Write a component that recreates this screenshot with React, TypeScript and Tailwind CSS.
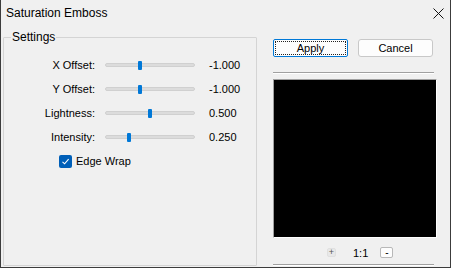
import React from "react";

const rows = [
  { label: "X Offset:", pos: 140, value: "-1.000" },
  { label: "Y Offset:", pos: 140, value: "-1.000" },
  { label: "Lightness:", pos: 150, value: "0.500" },
  { label: "Intensity:", pos: 129, value: "0.250" },
];

function Slider({ pos }: { pos: number }) {
  // track spans x 105..195
  const left = pos - 105 - 2;
  return (
    <div className="relative w-[90px] h-[24px] flex items-center">
      <div className="w-full h-[4px] bg-[#dcdcdc] border border-[#d0d0d0] rounded-[2px]" />
      <div
        className="absolute top-[8px] w-[4px] h-[9px] bg-[#0078d7] rounded-[1px]"
        style={{ left }}
      />
    </div>
  );
}

export default function App() {
  return (
    <div
      className="w-[451px] h-[268px] bg-[#f0f0f0] border-l border-r border-b border-[#3c3c3c] flex flex-col text-black overflow-hidden"
      style={{ fontFamily: '"Liberation Sans", Arial, sans-serif' }}
    >
      {/* title bar */}
      <div className="h-[29px] flex items-start">
        <div className="pl-[5px] pt-[5px] text-[12px] leading-[16px] flex-1">Saturation Emboss</div>
        <svg className="mt-[8px] mr-[6px]" width="11" height="11" viewBox="0 0 11 11">
          <path d="M0.5 0.5 L10.5 10.5 M10.5 0.5 L0.5 10.5" stroke="#111" strokeWidth="1" fill="none" />
        </svg>
      </div>

      <div className="flex flex-1">
        {/* settings group */}
        <fieldset className="ml-[2px] w-[254px] h-[237px] border border-[#d4d4d4] rounded-[1px] text-[11px]">
          <legend className="ml-[7px] px-[1px] text-[12px] leading-[16px]">Settings</legend>
          <div className="mt-[8px] flex flex-col">
            {rows.map((r) => (
              <div key={r.label} className="h-[24px] flex items-center">
                <div className="w-[91px] text-right leading-[14px]">{r.label}</div>
                <div className="ml-[10px]">
                  <Slider pos={r.pos} />
                </div>
                <div className="ml-[14px] leading-[14px]">{r.value}</div>
              </div>
            ))}
            <div className="mt-[4px] h-[16px] flex items-center pl-[55px]">
              <div className="w-[13px] h-[13px] rounded-[2px] bg-[#005fb8] flex items-center justify-center">
                <svg width="9" height="9" viewBox="0 0 9 9">
                  <path d="M1.5 4.8 L3.6 6.8 L7.6 2.2" stroke="#fff" strokeWidth="1.1" fill="none" />
                </svg>
              </div>
              <span className="ml-[4px] leading-[14px]">Edge Wrap</span>
            </div>
          </div>
        </fieldset>

        {/* right column */}
        <div className="ml-[16px] w-[164px] flex flex-col text-[11px]">
          <div className="mt-[10px] flex gap-[10px]">
            <div className="w-[75px] h-[18px] border border-[#0078d7] rounded-[2px] bg-[#fdfdfd] p-[1px]">
              <div className="w-full h-full border border-dotted border-[#222] flex items-center justify-center leading-[12px]">
                Apply
              </div>
            </div>
            <div className="w-[75px] h-[18px] border border-[#c8c8c8] rounded-[3px] bg-[#fdfdfd] flex items-center justify-center leading-[12px]">
              Cancel
            </div>
          </div>
          <div className="mt-[15px] w-[161px] h-[2px] border-t border-[#a0a0a0] border-b border-b-white" />
          <div className="mt-[5px] w-[164px] h-[159px] border-t border-l border-[#a0a0a0] border-b border-r border-b-white border-r-white bg-black" />
          <div className="mt-[9px] h-[11px] flex items-center">
            <div className="ml-[54px] w-[9px] h-[9px] rounded-[2px] bg-[#e8e8e8] border border-[#e0e0e0] flex items-center justify-center text-[#555] text-[9px] leading-[9px]">
              +
            </div>
            <span className="ml-[17px] leading-[12px]">1:1</span>
            <div className="ml-[12px] w-[13px] h-[11px] rounded-[2px] bg-[#fdfdfd] border border-[#b8b8b8] flex items-center justify-center text-[10px] leading-[10px]">
              -
            </div>
          </div>
          <div className="mt-[6px] w-[161px] h-[2px] border-t border-[#a0a0a0] border-b border-b-white" />
        </div>
      </div>
    </div>
  );
}
